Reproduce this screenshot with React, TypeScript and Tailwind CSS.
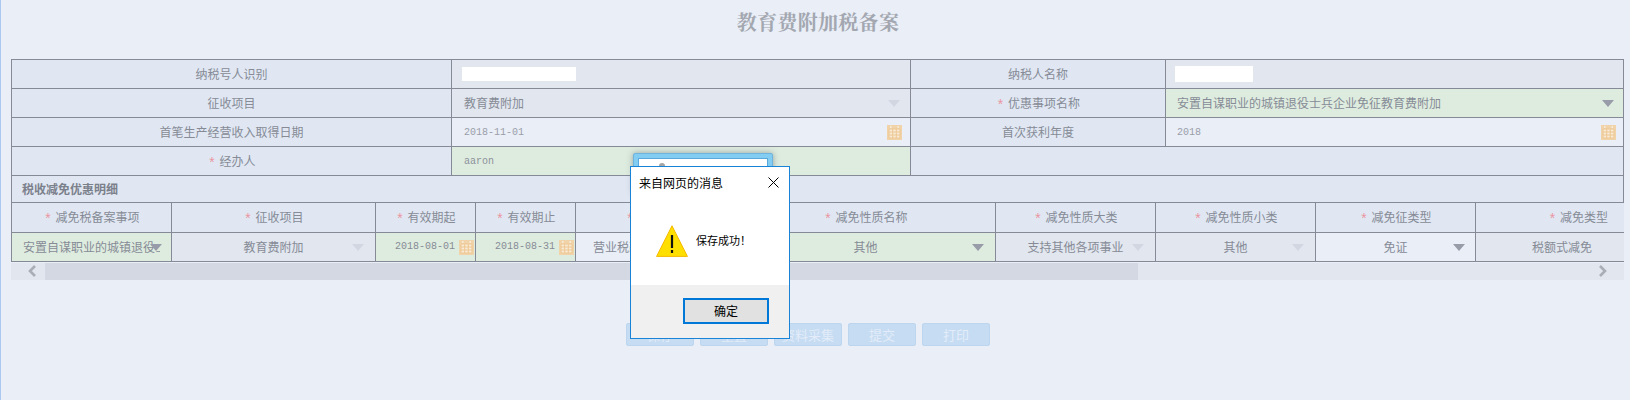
import React from "react";

const line = "border border-[#858a96]";
const cjk = "font-['Noto_Sans_CJK_SC','Liberation_Sans',sans-serif]";
const mono = "font-['Liberation_Mono','Noto_Sans_CJK_SC',monospace]";

function Star() {
  return <span className="inline-block translate-y-[2px] text-[#ea95a1] text-[14px] leading-[12px] mr-[3px] w-[9px] text-center font-['Liberation_Mono',monospace]">*</span>;
}

function Arrow({ dim, className }: { dim?: boolean; className: string }) {
  return (
    <svg width="12" height="7" viewBox="0 0 12 7" className={`absolute ${className}`}>
      <path d="M0 0H12L6 7Z" fill={dim ? "#d2d6e1" : "#989ca8"} />
    </svg>
  );
}

function Calendar({ className = "" }: { className?: string }) {
  return (
    <svg width="15" height="15" viewBox="0 0 15 15" className={`absolute ${className}`}>
      <rect x="0" y="0" width="15" height="15" fill="#f0d3a9" />
      <rect x="2" y="4" width="11" height="9" fill="#f7ead6" />
      <path d="M2 4H13M2 7H13M2 10H13M2 13H13M2 4V13M5.7 4V13M9.3 4V13M13 4V13" stroke="#eec792" strokeWidth="1" fill="none" />
      <rect x="3" y="1" width="1.5" height="2" fill="#f7ead6" />
      <rect x="10.5" y="1" width="1.5" height="2" fill="#f7ead6" />
    </svg>
  );
}

function Label({ star, children, colSpan }: { star?: boolean; children?: React.ReactNode; colSpan?: number }) {
  return (
    <td colSpan={colSpan} className={`${line} bg-[#e0e7f3] text-center p-0`}>
      {star && <Star />}
      {children}
    </td>
  );
}

function Chevron({ left, className }: { left?: boolean; className: string }) {
  return (
    <svg width="10" height="12" viewBox="0 0 10 12" className={className}>
      <path d={left ? "M8 1L3 6L8 11" : "M2 1L7 6L2 11"} fill="none" stroke="#a9adb6" strokeWidth="2.6" />
    </svg>
  );
}

function TriangleWarning() {
  return (
    <svg width="32" height="32" viewBox="0 0 32 32" className="shrink-0">
      <path d="M16 0.8L31.4 31.4H0.6Z" fill="#ffdf00" stroke="#f5b800" strokeWidth="1" />
      <rect x="14.9" y="10" width="2.2" height="13" fill="#111" />
      <rect x="14.9" y="25" width="2.2" height="3" fill="#111" />
    </svg>
  );
}

export default function App() {
  return (
    <div className={`relative h-[400px] w-[1630px] overflow-hidden bg-[#e9eef7] border-l border-[#a9c9f0] text-[12px] text-[#868b96] ${cjk}`}>
      <div className="h-[59px] pt-[8px] text-center pl-[5px] text-[20px] leading-[28px] font-bold tracking-[0.3px] text-[#a3a7b0] font-['Noto_Serif_CJK_SC','Noto_Sans_CJK_SC',serif]">
        教育费附加税备案
      </div>

      <div className="ml-[10px] w-[1613px]">
        <table className="w-[1612px] table-fixed border-collapse">
          <colgroup>
            <col className="w-[440px]" />
            <col className="w-[459px]" />
            <col className="w-[255px]" />
            <col className="w-[458px]" />
          </colgroup>
          <tbody>
            <tr className="h-[29px]">
              <Label>纳税号人识别</Label>
              <td className={`${line} bg-[#e1e6ef] p-0 pl-[10px]`}>
                <div className="w-[114px] h-[14px] bg-white -mt-[1px]" />
              </td>
              <Label>纳税人名称</Label>
              <td className={`${line} bg-[#e1e6ef] p-0 pl-[9px]`}>
                <div className="w-[78px] h-[16px] bg-white" />
              </td>
            </tr>
            <tr className="h-[29px]">
              <Label>征收项目</Label>
              <td className={`${line} bg-[#e1e6ef] p-0 pl-[12px] relative`}>
                教育费附加
                <Arrow dim className="right-[10px] top-[11px]" />
              </td>
              <Label star>优惠事项名称</Label>
              <td className={`${line} bg-[#deecdf] p-0 pl-[11px] relative`}>
                安置自谋职业的城镇退役士兵企业免征教育费附加
                <Arrow className="right-[9px] top-[11px]" />
              </td>
            </tr>
            <tr className="h-[29px]">
              <Label>首笔生产经营收入取得日期</Label>
              <td className={`${line} bg-[#e9eef7] p-0 pl-[12px] relative text-[10px] text-[#9a9ea9] ${mono}`}>
                2018-11-01
                <Calendar className="right-[8px] top-[7px]" />
              </td>
              <Label>首次获利年度</Label>
              <td className={`${line} bg-[#e9eef7] p-0 pl-[11px] relative text-[10px] text-[#9a9ea9] ${mono}`}>
                2018
                <Calendar className="right-[7px] top-[7px]" />
              </td>
            </tr>
            <tr className="h-[29px]">
              <Label star>经办人</Label>
              <td className={`${line} bg-[#deecdf] p-0 pl-[12px] text-[10px] text-[#8d919c] ${mono}`}>aaron</td>
              <td colSpan={2} className={`${line} bg-[#e0e7f3] p-0`} />
            </tr>
            <tr className="h-[27px]">
              <td colSpan={4} className={`${line} bg-[#e0e7f3] p-0 pl-[10px] font-bold text-[#7b808b]`}>
                税收减免优惠明细
              </td>
            </tr>
          </tbody>
        </table>

        <div className="w-[1613px] overflow-hidden">
          <table className="w-[1669px] table-fixed border-collapse">
            <colgroup>
              <col className="w-[160px]" />
              <col className="w-[204px]" />
              <col className="w-[100px]" />
              <col className="w-[100px]" />
              <col className="w-[160px]" />
              <col className="w-[260px]" />
              <col className="w-[160px]" />
              <col className="w-[160px]" />
              <col className="w-[160px]" />
              <col className="w-[205px]" />
            </colgroup>
            <tbody>
              <tr className="h-[29px]">
                <td className={`${line} border-t-0 bg-[#e0e7f3] text-center p-0`}><Star />减免税备案事项</td>
                <td className={`${line} border-t-0 bg-[#e0e7f3] text-center p-0`}><Star />征收项目</td>
                <td className={`${line} border-t-0 bg-[#e0e7f3] text-center p-0`}><Star />有效期起</td>
                <td className={`${line} border-t-0 bg-[#e0e7f3] text-center p-0`}><Star />有效期止</td>
                <td className={`${line} border-t-0 bg-[#e0e7f3] text-center p-0`}><Star />减免政策</td>
                <td className={`${line} border-t-0 bg-[#e0e7f3] text-center p-0`}><Star />减免性质名称</td>
                <td className={`${line} border-t-0 bg-[#e0e7f3] text-center p-0`}><Star />减免性质大类</td>
                <td className={`${line} border-t-0 bg-[#e0e7f3] text-center p-0`}><Star />减免性质小类</td>
                <td className={`${line} border-t-0 bg-[#e0e7f3] text-center p-0`}><Star />减免征类型</td>
                <td className={`${line} border-t-0 bg-[#e0e7f3] text-center p-0`}><Star />减免类型</td>
              </tr>
              <tr className="h-[29px]">
                <td className={`${line} bg-[#deecdf] p-0 pl-[11px] pr-[11px] relative`}>
                  <div className="overflow-hidden whitespace-nowrap">安置自谋职业的城镇退役士兵企业免征教育费附加</div>
                  <Arrow className="right-[9px] top-[11px]" />
                </td>
                <td className={`${line} bg-[#e1e6ef] p-0 text-center relative`}>
                  教育费附加
                  <Arrow dim className="right-[11px] top-[11px]" />
                </td>
                <td className={`${line} bg-[#deecdf] p-0 pl-[19px] relative text-[10px] ${mono}`}>
                  2018-08-01
                  <Calendar className="right-[1px] top-[7px]" />
                </td>
                <td className={`${line} bg-[#deecdf] p-0 pl-[19px] relative text-[10px] ${mono}`}>
                  2018-08-31
                  <Calendar className="right-[1px] top-[7px]" />
                </td>
                <td className={`${line} bg-[#e9eef7] p-0 pl-[17px] whitespace-nowrap overflow-hidden`}>营业税改征增值税</td>
                <td className={`${line} bg-[#deecdf] p-0 text-center relative`}>
                  其他
                  <Arrow className="right-[11px] top-[11px]" />
                </td>
                <td className={`${line} bg-[#e1e6ef] p-0 text-center relative`}>
                  支持其他各项事业
                  <Arrow dim className="right-[11px] top-[11px]" />
                </td>
                <td className={`${line} bg-[#e1e6ef] p-0 text-center relative`}>
                  其他
                  <Arrow dim className="right-[11px] top-[11px]" />
                </td>
                <td className={`${line} bg-[#e9eef7] p-0 text-center relative`}>
                  免证
                  <Arrow className="right-[10px] top-[11px]" />
                </td>
                <td className={`${line} bg-[#e1e6ef] p-0 text-center pr-[32px]`}>税额式减免</td>
              </tr>
            </tbody>
          </table>
        </div>

        <div className="mt-[1px] h-[17px] flex items-center bg-[#e2e6ef] w-[1613px]">
          <div className="w-[34px] h-full flex items-center justify-center pl-[8px]">
            <Chevron left className="" />
          </div>
          <div className="w-[1093px] h-full bg-[#d4d8e2]" />
          <div className="flex-1 flex justify-end pr-[16px]">
            <Chevron className="" />
          </div>
        </div>

        <div className="mt-[43px] ml-[615px] flex gap-[6px]">
          {["保存", "重置", "资料采集", "提交", "打印"].map((t) => (
            <button key={t} className="w-[68px] h-[23px] rounded-[2px] border border-[#bdd6ef] bg-[#c6dcf3] text-[#e3ecf8] text-[13px] leading-none">
              {t}
            </button>
          ))}
        </div>
      </div>

      {/* dialog behind */}
      <div className="absolute left-[632px] top-[153px] w-[140px] h-[40px] rounded-[2px] border border-[#6fb4dc] bg-[#82cdf1] shadow-[0_0_6px_rgba(80,90,100,0.5)] p-[4px]">
        <div className="h-full bg-white border border-[#5aa9dd]">
          <div className="ml-[20px] mt-[4px] w-[6px] h-[6px] rounded-full bg-[#a5a5a5]" />
        </div>
      </div>

      {/* alert dialog */}
      <div className={`absolute left-[629px] top-[166px] w-[160px] h-[173px] border border-[#1883d7] bg-white flex flex-col text-black`}>
        <div className="h-[30px] flex items-center justify-between pl-[8px] pr-[10px] pt-[1px]">
          <span className="text-[12px]">来自网页的消息</span>
          <svg width="11" height="11" viewBox="0 0 11 11">
            <path d="M0.5 0.5L10.5 10.5M10.5 0.5L0.5 10.5" stroke="#000" strokeWidth="1" />
          </svg>
        </div>
        <div className="flex-1 flex items-start pl-[25px] pt-[28px] gap-[8px]">
          <TriangleWarning />
          <span className="text-[11px] leading-[18px] mt-[6px]">保存成功！</span>
        </div>
        <div className="h-[53px] bg-[#f0f0f0] pt-[13px] pl-[52px]">
          <button className="w-[86px] h-[26px] border-2 border-[#0078d7] bg-[#e1e1e1] text-[12px] leading-none text-black">
            确定
          </button>
        </div>
      </div>
    </div>
  );
}
